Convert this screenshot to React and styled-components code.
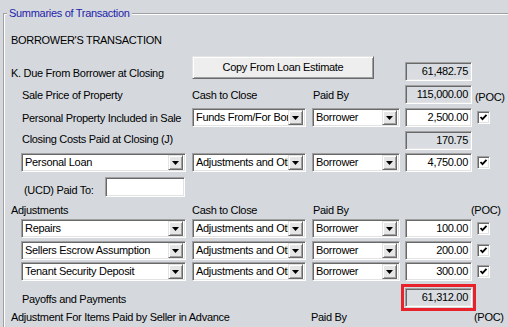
import React from 'react';
import styled, { createGlobalStyle } from 'styled-components';

const PAGE = '#d5d9de';

const GlobalStyle = createGlobalStyle`
  html, body {
    margin: 0;
    padding: 0;
    background: ${PAGE};
    overflow: hidden;
  }
  body {
    font-family: "Liberation Sans", Arial, sans-serif;
    font-size: 11px;
    letter-spacing: -0.3px;
    color: #000;
  }
`;

const Group = styled.fieldset`
  box-sizing: border-box;
  margin: 6px 0 0 3px;
  height: 321px;
  padding: 0 0 0 3px;
  border: 1px solid #a0a0a0;
  border-right: none;
  border-bottom: none;
  box-shadow: inset 1px 1px 0 #fff;
  min-inline-size: auto;
  overflow: hidden;
`;

const Legend = styled.legend`
  padding: 0 2px;
  line-height: 14px;
  color: #2323aa;
  background: ${PAGE};
`;

const Panel = styled.div`
  display: flex;
  flex-direction: column;
  padding-left: 4px;
`;

const Row = styled.div`
  display: grid;
  grid-template-columns: 181px 120px 93px 72px 1fr;
  align-items: center;
  height: ${(p) => p.$h}px;
  margin-top: ${(p) => p.$mt}px;
`;

const Label = styled.span`
  padding-left: ${(p) => p.$indent || 0}px;
  margin-left: ${(p) => p.$shift || 0}px;
  line-height: 14px;
  white-space: nowrap;
  align-self: ${(p) => p.$align || 'center'};
  margin-bottom: ${(p) => p.$mb || 0}px;
`;

const sunken = `
  box-sizing: border-box;
  border: 1px solid;
  border-color: #a0a0a0 #fff #fff #a0a0a0;
  box-shadow: inset 1px 1px 0 #696969, inset -1px -1px 0 #e3e3e3;
`;

const Amount = styled.div`
  ${sunken}
  width: 67px;
  height: 19px;
  padding-right: 3px;
  line-height: 17px;
  text-align: right;
  background: ${(p) => (p.$readOnly ? '#d9dde1' : '#fff')};
  align-self: ${(p) => p.$align || 'center'};
  outline: ${(p) => (p.$flag ? '3px solid #e8212b' : 'none')};
  outline-offset: 1px;
`;

const TextBox = styled.div`
  ${sunken}
  width: 80px;
  height: 20px;
  background: #fff;
`;

const SelectBox = styled.div`
  ${sunken}
  display: flex;
  align-items: center;
  width: ${(p) => p.$w}px;
  height: 19px;
  margin-left: ${(p) => p.$ml || 0}px;
  padding: 1px 2px 1px 1px;
  background: #fff;
  overflow: hidden;
`;

const SelectText = styled.span`
  flex: 1;
  min-width: 0;
  overflow: hidden;
  white-space: nowrap;
  padding-left: 2px;
  line-height: 15px;
`;

const ArrowBtn = styled.span`
  box-sizing: border-box;
  display: flex;
  align-items: center;
  justify-content: center;
  flex: none;
  width: 15px;
  height: 15px;
  background: #e6e6e6;
  border: 1px solid;
  border-color: #e3e3e3 #696969 #696969 #e3e3e3;
  box-shadow: inset 1px 1px 0 #fff, inset -1px -1px 0 #a0a0a0;
`;

const CheckBox = styled.span`
  ${sunken}
  display: flex;
  align-items: center;
  justify-content: center;
  width: 13px;
  height: 13px;
  background: #fff;
`;

const CopyButton = styled.button`
  grid-column: 2 / span 2;
  align-self: start;
  width: 182px;
  height: 23px;
  padding: 0 0 2px;
  font: inherit;
  letter-spacing: inherit;
  color: #000;
  background: #eeeeee;
  border: 1px solid;
  border-color: #e3e3e3 #696969 #696969 #e3e3e3;
  box-shadow: inset 1px 1px 0 #fff, inset -1px -1px 0 #a0a0a0;
`;

const UcdCell = styled.div`
  display: flex;
  align-items: center;
  width: 174px;
  ${Label} {
    flex: 1;
    margin-top: 5px;
  }
`;

const Select = ({ value, w, ml }) => (
  <SelectBox $w={w} $ml={ml}>
    <SelectText>{value}</SelectText>
    <ArrowBtn>
      <svg width="7" height="4" viewBox="0 0 7 4">
        <polygon points="0,0 7,0 3.5,4" fill="#000" />
      </svg>
    </ArrowBtn>
  </SelectBox>
);

const Check = () => (
  <CheckBox>
    <svg width="9" height="9" viewBox="0 0 9 9">
      <polyline points="1.5,4 3.5,6.2 7.5,1.8" fill="none" stroke="#000" strokeWidth="1.8" />
    </svg>
  </CheckBox>
);

const adjustments = [
  { name: 'Repairs', amount: '100.00', mt: 2 },
  { name: 'Sellers Escrow Assumption', amount: '200.00', mt: 3 },
  { name: 'Tenant Security Deposit', amount: '300.00', mt: 2 },
];

export default function App() {
  return (
    <>
      <GlobalStyle />
      <Group>
        <Legend>Summaries of Transaction</Legend>
        <Panel>
          <Row $h={14} $mt={13}>
            <Label>BORROWER'S TRANSACTION</Label>
          </Row>

          <Row $h={25} $mt={9}>
            <Label $align="end" $mb={1}>K. Due From Borrower at Closing</Label>
            <CopyButton>Copy From Loan Estimate</CopyButton>
            <Amount $readOnly $align="end">61,482.75</Amount>
          </Row>

          <Row $h={19} $mt={4}>
            <Label $indent={11}>Sale Price of Property</Label>
            <Label>Cash to Close</Label>
            <Label $shift={1}>Paid By</Label>
            <Amount $readOnly>115,000.00</Amount>
            <Label $align="end" $shift={-2}>(POC)</Label>
          </Row>

          <Row $h={19} $mt={4}>
            <Label $indent={11}>Personal Property Included in Sale</Label>
            <Select value="Funds From/For Borrower" w={114} />
            <Select value="Borrower" w={88} />
            <Amount>2,500.00</Amount>
            <Check />
          </Row>

          <Row $h={19} $mt={4}>
            <Label $indent={11} $mb={4}>Closing Costs Paid at Closing (J)</Label>
            <span />
            <span />
            <Amount $readOnly>170.75</Amount>
          </Row>

          <Row $h={19} $mt={3}>
            <Select value="Personal Loan" w={165} ml={10} />
            <Select value="Adjustments and Other Credits" w={114} />
            <Select value="Borrower" w={88} />
            <Amount>4,750.00</Amount>
            <Check />
          </Row>

          <Row $h={20} $mt={5}>
            <UcdCell>
              <Label $indent={13}>(UCD) Paid To:</Label>
              <TextBox />
            </UcdCell>
          </Row>

          <Row $h={14} $mt={6}>
            <Label>Adjustments</Label>
            <Label>Cash to Close</Label>
            <Label $shift={1}>Paid By</Label>
            <span />
            <Label $shift={-6}>(POC)</Label>
          </Row>

          {adjustments.map((a) => (
            <Row key={a.name} $h={19} $mt={a.mt}>
              <Select value={a.name} w={165} ml={10} />
              <Select value="Adjustments and Other Credits" w={114} />
              <Select value="Borrower" w={88} />
              <Amount>{a.amount}</Amount>
              <Check />
            </Row>
          ))}

          <Row $h={19} $mt={7}>
            <Label $indent={11} $align="end" $mb={1}>Payoffs and Payments</Label>
            <span />
            <span />
            <Amount $readOnly $flag>61,312.00</Amount>
          </Row>

          <Row $h={14} $mt={3}>
            <Label>Adjustment For Items Paid by Seller in Advance</Label>
            <span />
            <Label $shift={-1}>Paid By</Label>
            <span />
            <Label $shift={-3}>(POC)</Label>
          </Row>
        </Panel>
      </Group>
    </>
  );
}
